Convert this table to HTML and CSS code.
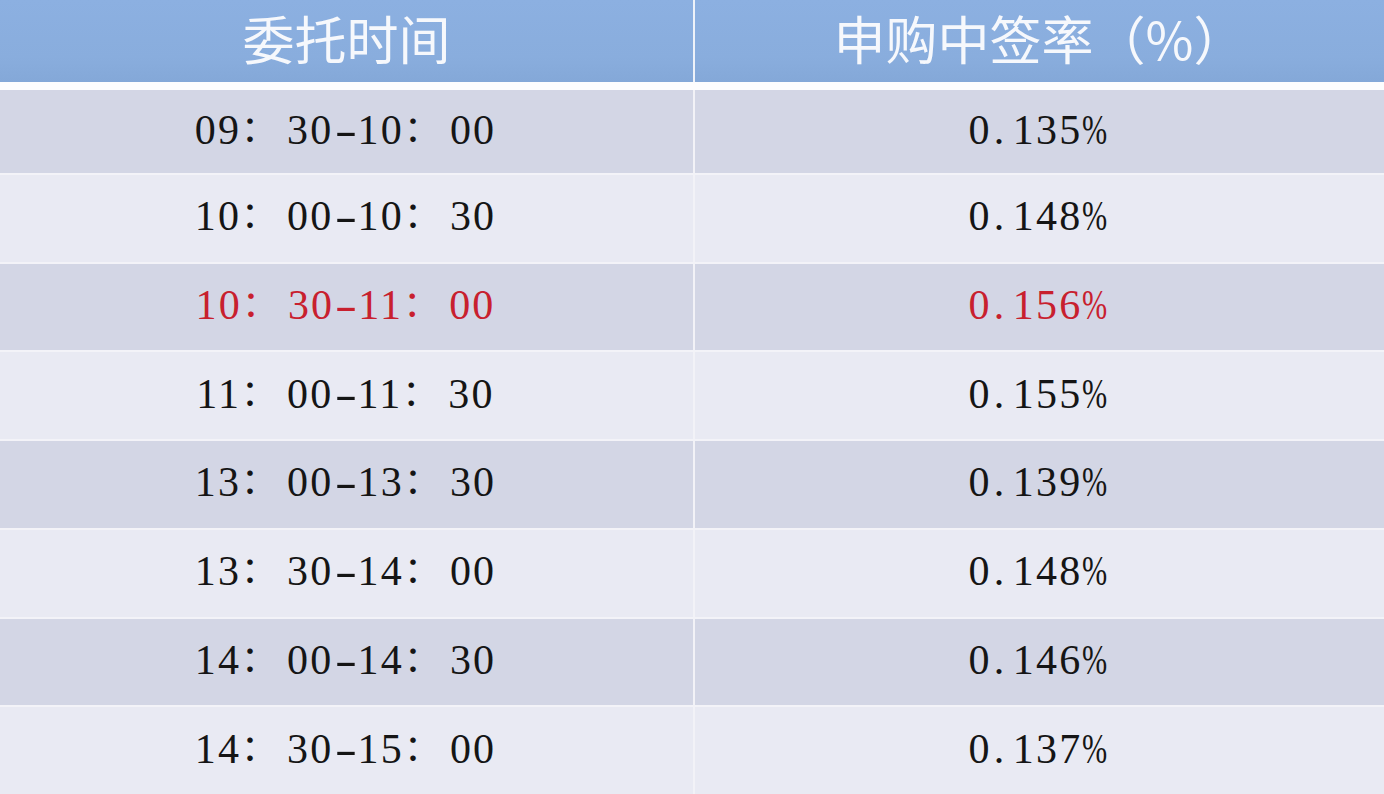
FILE: index.html
```html
<!DOCTYPE html>
<html lang="zh-CN">
<head>
<meta charset="utf-8">
<title>委托时间与申购中签率</title>
<link rel="stylesheet" href="styles.css">
</head>
<body>
<div class="sheet">
  <div class="head">
    <div class="hcell">委托时间</div>
    <div class="hcell">申购中签率（%）</div>
  </div>
  <div class="rows">
    <div class="row dark"><div class="cell time">09<span class="colon">：</span>30<span class="dash">-</span>10<span class="colon">：</span>00</div><div class="cell rate">0<span class="dot">.</span>135<span class="pct">%</span></div></div>
    <div class="row light"><div class="cell time">10<span class="colon">：</span>00<span class="dash">-</span>10<span class="colon">：</span>30</div><div class="cell rate">0<span class="dot">.</span>148<span class="pct">%</span></div></div>
    <div class="row dark hot"><div class="cell time">10<span class="colon">：</span>30<span class="dash">-</span>11<span class="colon">：</span>00</div><div class="cell rate">0<span class="dot">.</span>156<span class="pct">%</span></div></div>
    <div class="row light"><div class="cell time">11<span class="colon">：</span>00<span class="dash">-</span>11<span class="colon">：</span>30</div><div class="cell rate">0<span class="dot">.</span>155<span class="pct">%</span></div></div>
    <div class="row dark"><div class="cell time">13<span class="colon">：</span>00<span class="dash">-</span>13<span class="colon">：</span>30</div><div class="cell rate">0<span class="dot">.</span>139<span class="pct">%</span></div></div>
    <div class="row light"><div class="cell time">13<span class="colon">：</span>30<span class="dash">-</span>14<span class="colon">：</span>00</div><div class="cell rate">0<span class="dot">.</span>148<span class="pct">%</span></div></div>
    <div class="row dark"><div class="cell time">14<span class="colon">：</span>00<span class="dash">-</span>14<span class="colon">：</span>30</div><div class="cell rate">0<span class="dot">.</span>146<span class="pct">%</span></div></div>
    <div class="row light"><div class="cell time">14<span class="colon">：</span>30<span class="dash">-</span>15<span class="colon">：</span>00</div><div class="cell rate">0<span class="dot">.</span>137<span class="pct">%</span></div></div>
  </div>
</div>
</body>
</html>
```
FILE: styles.css
```css
html, body {
  margin: 0;
  padding: 0;
  background: #fdfdfe;
}
.sheet {
  width: 1384px;
  height: 794px;
  display: flex;
  flex-direction: column;
  overflow: hidden;
}
.head {
  height: 82px;
  flex: none;
  display: grid;
  grid-template-columns: 693px 1fr;
  grid-template-rows: 82px;
  column-gap: 2px;
  background: #eef2f9;
  margin-bottom: 8px;
}
.hcell {
  background: linear-gradient(to bottom, #8cb0e1 0%, #89addd 70%, #84a8d8 100%);
  color: #f6f8fc;
  font-family: "Noto Sans CJK SC", sans-serif;
  font-size: 52px;
  line-height: 52px;
  font-weight: 400;
  display: flex;
  align-items: center;
  justify-content: center;
  padding-bottom: 6px;
  box-sizing: border-box;
}
.rows {
  flex: 1;
  display: grid;
  grid-template-rows: 83px repeat(7, 1fr);
  row-gap: 2px;
  background: #f3f3f8;
}
.row {
  display: grid;
  grid-template-columns: 693px 1fr;
  column-gap: 2px;
  background: #f2f2f7;
}
.cell {
  display: flex;
  align-items: center;
  justify-content: center;
  font-family: "Liberation Serif", "Noto Sans CJK SC", serif;
  font-size: 42px;
  line-height: 1;
  letter-spacing: 2.2px;
  color: #151515;
  white-space: nowrap;
  box-sizing: border-box;
}
.time { padding-bottom: 4px; padding-right: 2px; }
.rate { padding-bottom: 4px; padding-right: 5px; }
.dark .cell { background: #d3d6e5; }
.light .cell { background: #e9eaf3; }
.hot .cell { color: #c8202e; }
.colon {
  display: inline-block;
  width: 46px;
  font-size: 36px;
  letter-spacing: 0;
  text-align: left;
  vertical-align: -3px;
}
.dash {
  display: inline-block;
  width: 14px;
  margin: 0 5px;
  letter-spacing: 0;
  text-align: center;
  transform: scaleX(1.6);
}
.dot {
  display: inline-block;
  width: 0.5em;
  text-align: left;
  padding-left: 0.05em;
  box-sizing: border-box;
}
.pct {
  display: inline-block;
  width: 0.55em;
  transform: scaleX(0.72);
  transform-origin: left center;
}
```
